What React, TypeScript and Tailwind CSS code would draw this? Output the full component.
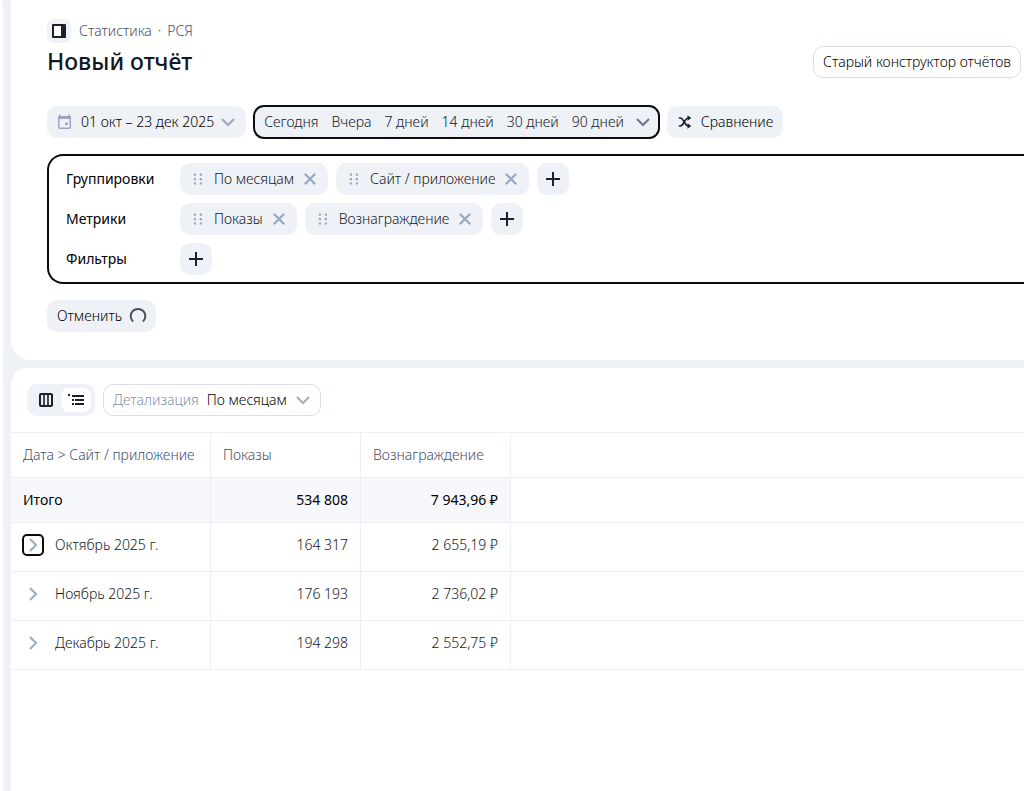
import React from 'react';
import { clsx } from 'clsx';

const PRESETS = ['Сегодня', 'Вчера', '7 дней', '14 дней', '30 дней', '90 дней'];

const FIELDS = [
  { label: 'Группировки', items: ['По месяцам', 'Сайт / приложение'] },
  { label: 'Метрики', items: ['Показы', 'Вознаграждение'] },
  { label: 'Фильтры', items: [] },
];

const ROWS = [
  { name: 'Октябрь 2025 г.', shows: '164 317', reward: '2 655,19 ₽', focused: true },
  { name: 'Ноябрь 2025 г.', shows: '176 193', reward: '2 736,02 ₽' },
  { name: 'Декабрь 2025 г.', shows: '194 298', reward: '2 552,75 ₽' },
];

function ChevronDown({ className }: { className?: string }) {
  return (
    <svg viewBox="0 0 16 16" className={clsx('size-4 shrink-0', className)} fill="none" stroke="currentColor" strokeWidth="2">
      <path d="M2 5l6 6 6-6" />
    </svg>
  );
}

function ChevronRight() {
  return (
    <svg viewBox="0 0 16 16" className="size-4 text-[#a3adc2]" fill="none" stroke="currentColor" strokeWidth="2.2">
      <path d="M5 2l6 6-6 6" />
    </svg>
  );
}

function AddButton({ label }: { label: string }) {
  return (
    <button aria-label={label} className="flex size-8 items-center justify-center rounded-[10px] bg-[#eef1f6]">
      <svg viewBox="0 0 16 16" className="size-4" fill="none" stroke="#1c2029" strokeWidth="2">
        <path d="M8 1v14M1 8h14" />
      </svg>
    </button>
  );
}

function Chip({ text }: { text: string }) {
  return (
    <div className="flex h-8 items-center rounded-[10px] bg-[#eef1f6] pr-2.5 pl-3">
      <svg viewBox="0 0 12 12" className="size-3 shrink-0 text-[#9aa6c0]" fill="currentColor">
        {[0.6, 5, 9.4].map((y) => (
          <React.Fragment key={y}>
            <rect x="1.8" y={y} width="2.2" height="2.2" rx="0.5" />
            <rect x="7.8" y={y} width="2.2" height="2.2" rx="0.5" />
          </React.Fragment>
        ))}
      </svg>
      <span className="ml-2.5">{text}</span>
      <button aria-label={`Удалить ${text}`} className="ml-2">
        <svg viewBox="0 0 16 16" className="size-4 text-[#9aa6c0]" fill="none" stroke="currentColor" strokeWidth="2.2">
          <path d="M2.8 2.8l10.4 10.4M13.2 2.8L2.8 13.2" />
        </svg>
      </button>
    </div>
  );
}

function ReportHeader() {
  return (
    <section className="rounded-bl-[20px] bg-white pt-[19px] pb-7 pl-9">
      <div className="flex items-end justify-between pr-[3px]">
        <div>
          <div className="flex items-center gap-2">
            <button aria-label="Меню" className="flex size-6 items-center justify-center rounded-lg bg-[#eef1f6]">
              <svg viewBox="0 0 14 14" className="size-3.5">
                <rect width="14" height="14" rx="1" fill="#1c2029" />
                <rect x="2" y="2" width="7" height="10" fill="#fff" />
              </svg>
            </button>
            <nav className="flex gap-1.5 text-[#454d69]">
              <a href="#stat">Статистика</a>
              <span>·</span>
              <a href="#rsya">РСЯ</a>
            </nav>
          </div>
          <h1 className="mt-1 text-[23px] leading-7 font-medium">Новый отчёт</h1>
        </div>
        <button className="-mb-[3px] h-8 rounded-[10px] border border-[#d9dceb] px-[9px] text-black">
          Старый конструктор отчётов
        </button>
      </div>

      <div className="mt-[31px] flex gap-2">
        <button className="flex h-8 items-center rounded-[10px] bg-[#eef1f6] px-2.5 text-black">
          <svg viewBox="0 0 16 16" className="mr-2 size-4 text-[#9aa6c0]" fill="none" stroke="currentColor">
            <rect x="1.75" y="2.75" width="11.5" height="11.5" rx="1" strokeWidth="1.5" />
            <path d="M1 3.5h13" strokeWidth="3" />
            <path d="M3 .5v2M12 .5v2" strokeWidth="1.5" />
            <circle cx="9.5" cy="9.8" r="1.5" fill="currentColor" stroke="none" />
          </svg>
          01 окт – 23 дек 2025
          <ChevronDown className="ml-1.5 text-[#9aa6c0]" />
        </button>
        <div className="flex h-8 items-center gap-[13px] rounded-[10px] bg-[#eef1f6] pr-2 pl-2.5 outline-2 -outline-offset-1 outline-[#0b0c10]">
          {PRESETS.map((preset) => (
            <button key={preset}>{preset}</button>
          ))}
          <button aria-label="Другие периоды" className="-ml-0.5">
            <ChevronDown className="text-[#6d7890]" />
          </button>
        </div>
        <button className="flex h-8 items-center gap-2 rounded-[10px] bg-[#eef1f6] px-2.5 text-black">
          <svg viewBox="0 0 16 16" className="size-4" fill="none" stroke="#1c2029" strokeWidth="1.7">
            <path d="M1.8 4h1.5C7 4 7.4 12 11.5 12M1.8 12h1.5C7 12 7.4 4 11.5 4" />
            <path d="M10.5 1.3 14.3 4l-3.8 2.7zM10.5 9.3l3.8 2.7-3.8 2.7z" fill="#1c2029" stroke="none" />
          </svg>
          Сравнение
        </button>
      </div>

      <div className="mt-4 flex flex-col gap-2 rounded-l-2xl border-2 border-r-0 border-[#0b0c10] py-[7px] pl-[17px]">
        {FIELDS.map((field) => (
          <div key={field.label} className="flex items-center">
            <span className="w-[114px] font-normal text-black">{field.label}</span>
            <div className="flex gap-2">
              {field.items.map((item) => (
                <Chip key={item} text={item} />
              ))}
              <AddButton label={`Добавить: ${field.label}`} />
            </div>
          </div>
        ))}
      </div>

      <button className="mt-4 flex h-8 items-center gap-1.5 rounded-[10px] bg-[#eef1f6] pr-2 pl-2.5 text-black">
        Отменить
        <svg viewBox="0 0 20 20" className="size-5" fill="none" stroke="#4c515c" strokeWidth="2">
          <path d="M5 15.5A7.3 7.3 0 1 1 15 15.5" />
        </svg>
      </button>
    </section>
  );
}

function ReportTable() {
  const cell = 'border-r border-b border-[#eceff5] px-3';
  return (
    <table className="w-full table-fixed border-separate border-spacing-0 border-t border-[#eceff5] text-left">
      <colgroup>
        <col className="w-[200px]" />
        <col className="w-[150px]" />
        <col className="w-[150px]" />
        <col />
      </colgroup>
      <thead>
        <tr className="h-[45px] text-[#454d69]">
          <th className={clsx(cell, 'font-light whitespace-nowrap')}>Дата &gt; Сайт / приложение</th>
          <th className={clsx(cell, 'font-light')}>Показы</th>
          <th className={clsx(cell, 'font-light')}>Вознаграждение</th>
          <td className="border-b border-[#eceff5]" />
        </tr>
      </thead>
      <tbody>
        <tr className="h-[45px] font-normal text-black">
          <td className={clsx(cell, 'bg-[#f6f8fc]')}>Итого</td>
          <td className={clsx(cell, 'bg-[#f6f8fc] text-right')}>534 808</td>
          <td className={clsx(cell, 'bg-[#f6f8fc] text-right')}>7 943,96 ₽</td>
          <td className="border-b border-[#eceff5]" />
        </tr>
        {ROWS.map((row) => (
          <tr key={row.name} className="h-[49px]">
            <td className={clsx(cell, 'pb-1')}>
              <div className="flex items-center gap-3">
                <button
                  aria-label={`Раскрыть ${row.name}`}
                  className={clsx(
                    'flex size-5 items-center justify-center rounded-sm',
                    row.focused && 'outline-2 -outline-offset-1 outline-[#0b0c10]'
                  )}
                >
                  <ChevronRight />
                </button>
                {row.name}
              </div>
            </td>
            <td className={clsx(cell, 'pb-1 text-right')}>{row.shows}</td>
            <td className={clsx(cell, 'pb-1 text-right')}>{row.reward}</td>
            <td className="border-b border-[#eceff5]" />
          </tr>
        ))}
      </tbody>
    </table>
  );
}

export default function App() {
  return (
    <div className="flex min-h-screen overflow-hidden bg-[#eef1f6] font-['Noto_Sans',sans-serif] text-sm leading-5 font-light text-[#14171f]">
      <aside className="w-[3px] shrink-0 rounded-tr-[3px] bg-white" />
      <main className="ml-2 flex min-w-0 flex-1 flex-col gap-2">
        <ReportHeader />
        <section className="flex-1 rounded-tl-2xl bg-white pt-4">
          <div className="mb-4 flex gap-2 pl-4">
            <div className="flex h-8 items-center rounded-[10px] bg-[#eef1f6] p-1">
              <button aria-label="Таблица" className="flex h-6 w-[30px] items-center justify-center">
                <svg viewBox="0 0 14 14" className="size-3.5" fill="none" stroke="#1c2029" strokeWidth="2">
                  <rect x="1" y="1" width="12" height="12" rx="1" />
                  <path d="M5 1v12M9 1v12" strokeWidth="1.6" />
                </svg>
              </button>
              <button aria-label="Дерево" className="flex h-6 w-[30px] items-center justify-center rounded-lg bg-white">
                <svg viewBox="0 0 16 12" className="h-3 w-4" fill="#1c2029">
                  <path d="M0 0h2v2H0zM4 1h12v2H4zM4 5h2v2H4zM7 5h9v2H7zM4 9h2v2H4zM7 9h9v2H7z" />
                </svg>
              </button>
            </div>
            <div className="relative flex h-8 items-center rounded-[10px] border border-[#d9dceb] pl-[9px]">
              <label htmlFor="detail" className="mr-2 text-[#8590a6]">
                Детализация
              </label>
              <select id="detail" className="h-full appearance-none bg-transparent pr-8 text-black outline-none">
                <option>По месяцам</option>
              </select>
              <ChevronDown className="pointer-events-none absolute right-[9px] text-[#a3adc2]" />
            </div>
          </div>
          <ReportTable />
        </section>
      </main>
    </div>
  );
}
